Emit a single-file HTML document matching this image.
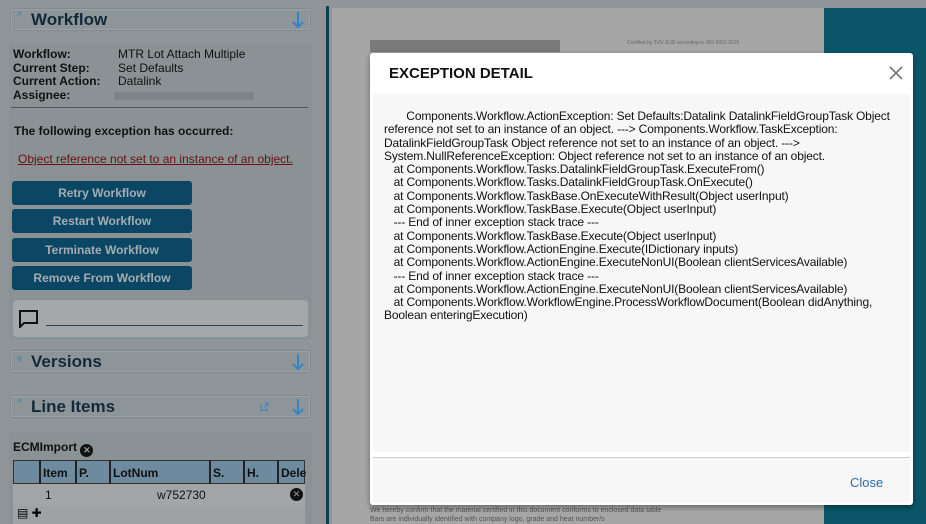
<!DOCTYPE html>
<html><head><meta charset="utf-8"><style>
*{box-sizing:border-box;margin:0;padding:0}
body{width:926px;height:524px;overflow:hidden;position:relative;background:#8f9598;font-family:"Liberation Sans",sans-serif;}
.left{position:absolute;left:0;top:0;width:326px;height:524px;background:#8f9598}
.hdr{position:absolute;left:10px;width:301px;height:23px;background:#8d9598;border:1px solid #7f8a8f;border-radius:3px;box-shadow:inset 0 0 0 1px #9aa3a6}
.hdr .t{position:absolute;left:20px;top:0px;font-size:17px;font-weight:bold;color:#13293a;line-height:22px}
.hdr .c{position:absolute;left:6px;top:2px;font-size:10px;color:#3b7fa8}
.hdr .a{position:absolute;right:6px;top:2px}
.box{position:absolute;left:9px;width:303px;background:#8a9295}
.lbl{position:absolute;font-size:12px;font-weight:bold;color:#111}
.val{position:absolute;font-size:12px;color:#111}
.btn{position:absolute;left:12px;width:180px;height:24px;background:#0b4664;border-radius:3px;color:#a3adb2;font-weight:bold;font-size:12px;text-align:center;line-height:24px}
.right{position:absolute;left:326px;top:0;width:600px;height:524px;background:#8f9598}
.doc{position:absolute;left:332px;top:8px;width:492px;height:516px;background:#a6a6a6}
.teal{position:absolute;left:824px;top:8px;width:102px;height:516px;background:#0a5668}
.modal{position:absolute;left:370px;top:53px;width:543px;height:452px;background:#fff;border-radius:3px;box-shadow:0 2px 6px rgba(0,0,0,.4)}
.mbody{position:absolute;left:3px;top:41px;width:537px;height:358px;background:#f7f7f7;font-size:12px;letter-spacing:-0.15px;color:#111;line-height:13.3px;padding:16px 8px 0 11px;white-space:pre-wrap}
</style></head><body>
<div class="left">
 <div class="hdr" style="top:8px"><span class="c">^</span><span class="t">Workflow</span><span class="a"><svg width="12" height="18"><path d="M6 1V16M1 11L6 16L11 11" stroke="#3583c7" stroke-width="2" fill="none"/></svg></span></div>
 <div class="box" style="top:44px;height:296px">
  <div class="lbl" style="left:4px;top:3px">Workflow:</div><div class="val" style="left:109px;top:3px">MTR Lot Attach Multiple</div>
  <div class="lbl" style="left:4px;top:17px">Current Step:</div><div class="val" style="left:109px;top:17px">Set Defaults</div>
  <div class="lbl" style="left:4px;top:30px">Current Action:</div><div class="val" style="left:109px;top:30px">Datalink</div>
  <div class="lbl" style="left:4px;top:44px">Assignee:</div>
  <div style="position:absolute;left:105px;top:48px;width:140px;height:8px;background:#7f8488"></div>
  <div style="position:absolute;left:2px;top:63px;width:297px;height:1px;background:#555"></div>
  <div class="lbl" style="left:5px;top:80px">The following exception has occurred:</div>
  <div style="position:absolute;left:9px;top:108px;font-size:12px;color:#6a1010;text-decoration:underline">Object reference not set to an instance of an object.</div>
  <div style="position:absolute;left:4px;top:256px;width:295px;height:37px;background:#a5a8a9;border:1px solid #9aa;border-radius:4px">
   <svg style="position:absolute;left:5px;top:9px" width="20" height="18"><path d="M1 1H18V13H5L1 17Z" stroke="#111" stroke-width="2" fill="none"/></svg>
   <div style="position:absolute;left:32px;top:24px;width:257px;height:1px;background:#245;"></div>
  </div>
 </div>
 <div class="btn" style="top:181px">Retry Workflow</div>
 <div class="btn" style="top:209px">Restart Workflow</div>
 <div class="btn" style="top:238px">Terminate Workflow</div>
 <div class="btn" style="top:266px">Remove From Workflow</div>
 <div class="hdr" style="top:350px"><span class="c">v</span><span class="t">Versions</span><span class="a"><svg width="12" height="18"><path d="M6 1V16M1 11L6 16L11 11" stroke="#3583c7" stroke-width="2" fill="none"/></svg></span></div>
 <div class="hdr" style="top:395px"><span class="c">^</span><span class="t">Line Items</span><svg style="position:absolute;left:249px;top:6px" width="9" height="9"><path d="M1 2V8H7V5M4 5L8 1M5 1H8V4" stroke="#3583c7" fill="none"/></svg><span class="a"><svg width="12" height="18"><path d="M6 1V16M1 11L6 16L11 11" stroke="#3583c7" stroke-width="2" fill="none"/></svg></span></div>
 <div class="box" style="top:431px;height:93px">
  <div class="lbl" style="left:4px;top:9px">ECMImport <span style="display:inline-block;width:13px;height:13px;border-radius:50%;background:#111;color:#999;font-size:9px;text-align:center;line-height:13px;vertical-align:-2px">✕</span></div>
  <div style="position:absolute;left:4px;top:29px;width:292px;height:24px;background:#6d8a9e;border:1px solid #333"></div>
  <div style="position:absolute;left:4px;top:53px;width:292px;height:22px;background:#a3a5a6"></div>
  <div style="position:absolute;left:4px;top:75px;width:292px;height:18px;background:#9fa2a3;font-size:12px;padding-left:4px">▤ ✚</div>
  <div class="lbl" style="left:34px;top:35px">Item</div><div class="lbl" style="left:70px;top:35px">P.</div><div class="lbl" style="left:104px;top:35px">LotNum</div><div class="lbl" style="left:204px;top:35px">S.</div><div class="lbl" style="left:238px;top:35px">H.</div><div class="lbl" style="left:272px;top:35px">Dele</div>
  <div style="position:absolute;left:30px;top:29px;width:2px;height:24px;background:#222"></div>
  <div style="position:absolute;left:66px;top:29px;width:2px;height:24px;background:#222"></div>
  <div style="position:absolute;left:100px;top:29px;width:2px;height:24px;background:#222"></div>
  <div style="position:absolute;left:200px;top:29px;width:2px;height:24px;background:#222"></div>
  <div style="position:absolute;left:234px;top:29px;width:2px;height:24px;background:#222"></div>
  <div style="position:absolute;left:268px;top:29px;width:2px;height:24px;background:#222"></div>
  <div class="val" style="left:36px;top:57px">1</div><div class="val" style="left:148px;top:57px">w752730</div>
  <div style="position:absolute;left:281px;top:57px;width:13px;height:13px;border-radius:50%;background:#111;color:#999;font-size:9px;text-align:center;line-height:13px">✕</div>
 </div>
</div>
<div class="right">
 <div style="position:absolute;left:0;top:6px;width:3px;height:518px;background:#0a4050"></div>
</div>
<div class="doc">
 <div style="position:absolute;left:38px;top:32px;width:190px;height:12px;background:#7a7a7a"></div>
 <div style="position:absolute;left:295px;top:32px;font-size:5px;color:#666">Certified by TUV SUD according to ISO 9001:2015</div>
 <div style="position:absolute;left:38px;top:498px;font-size:7px;color:#555;line-height:9px">We hereby confirm that the material certified in this document conforms to enclosed data table<br>Bars are individually identified with company logo, grade and heat number/s</div>
</div>
<div class="teal"></div>
<div class="modal">
 <div style="position:absolute;left:19px;top:12px;font-size:15px;font-weight:bold;color:#111">EXCEPTION DETAIL</div>
 <svg style="position:absolute;right:10px;top:13px" width="14" height="14"><path d="M1 1L13 13M13 1L1 13" stroke="#777" stroke-width="1.6"/></svg>
 <div class="mbody">       Components.Workflow.ActionException: Set Defaults:Datalink DatalinkFieldGroupTask Object reference not set to an instance of an object. ---&gt; Components.Workflow.TaskException: DatalinkFieldGroupTask Object reference not set to an instance of an object. ---&gt; System.NullReferenceException: Object reference not set to an instance of an object.
   at Components.Workflow.Tasks.DatalinkFieldGroupTask.ExecuteFrom()
   at Components.Workflow.Tasks.DatalinkFieldGroupTask.OnExecute()
   at Components.Workflow.TaskBase.OnExecuteWithResult(Object userInput)
   at Components.Workflow.TaskBase.Execute(Object userInput)
   --- End of inner exception stack trace ---
   at Components.Workflow.TaskBase.Execute(Object userInput)
   at Components.Workflow.ActionEngine.Execute(IDictionary inputs)
   at Components.Workflow.ActionEngine.ExecuteNonUI(Boolean clientServicesAvailable)
   --- End of inner exception stack trace ---
   at Components.Workflow.ActionEngine.ExecuteNonUI(Boolean clientServicesAvailable)
   at Components.Workflow.WorkflowEngine.ProcessWorkflowDocument(Boolean didAnything, Boolean enteringExecution)</div>
 <div style="position:absolute;left:3px;top:404px;width:537px;height:1px;background:#ccc"></div>
 <div style="position:absolute;left:3px;top:405px;width:537px;height:45px;background:#f7f7f7"></div>
 <div style="position:absolute;left:480px;top:422px;font-size:13px;color:#2a6ea8">Close</div>
</div>
</body></html>
